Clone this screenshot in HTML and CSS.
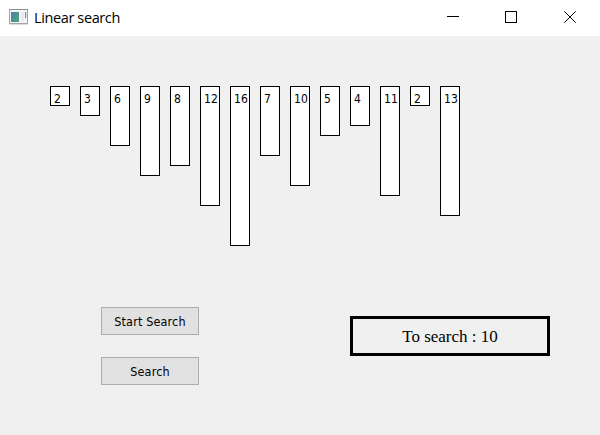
FILE: index.html
```html
<!DOCTYPE html>
<html lang="en">
<head>
<meta charset="utf-8">
<title>Linear search</title>
<link rel="stylesheet" href="styles.css">
</head>
<body>
<header class="titlebar">
  <svg class="app-icon" width="19" height="16" viewBox="0 0 19 16">
    <defs>
      <linearGradient id="pane" x1="0" y1="0" x2="1" y2="1">
        <stop offset="0" stop-color="#4a7fa8"/>
        <stop offset="1" stop-color="#4fa67c"/>
      </linearGradient>
    </defs>
    <rect x=".5" y=".5" width="18" height="14" fill="#f4f4f6" stroke="#a2a6ac"/>
    <path d="M0 .5h19" stroke="#8b9097"/>
    <path d="M0 15.5h19" stroke="#dcdcdc"/>
    <rect x="2" y="3" width="8" height="10" fill="url(#pane)"/>
    <rect x="12" y="3" width="3" height="10" fill="#e8eaee"/>
    <rect x="16" y="3" width="1.2" height="6" fill="#5b9d9c"/>
  </svg>
  <span class="title">Linear search</span>
  <div class="controls">
    <svg width="12" height="12" viewBox="0 0 12 12"><path d="M0 5.5h12"/></svg>
    <svg width="12" height="12" viewBox="0 0 12 12"><rect x=".5" y=".5" width="11" height="11"/></svg>
    <svg class="close" width="12" height="12" viewBox="0 0 12 12"><path d="M.3 .3l11.4 11.4M11.7 .3L.3 11.7"/></svg>
  </div>
</header>
<main>
  <div class="bars">
    <div class="bar" style="height:20px">2</div>
    <div class="bar" style="height:30px">3</div>
    <div class="bar" style="height:60px">6</div>
    <div class="bar" style="height:90px">9</div>
    <div class="bar" style="height:80px">8</div>
    <div class="bar" style="height:120px">12</div>
    <div class="bar" style="height:160px">16</div>
    <div class="bar" style="height:70px">7</div>
    <div class="bar" style="height:100px">10</div>
    <div class="bar" style="height:50px">5</div>
    <div class="bar" style="height:40px">4</div>
    <div class="bar" style="height:110px">11</div>
    <div class="bar" style="height:20px">2</div>
    <div class="bar" style="height:130px">13</div>
  </div>
  <div class="panel">
    <div class="buttons">
      <button>Start Search</button>
      <button>Search</button>
    </div>
    <div class="target">To search : 10</div>
  </div>
</main>
</body>
</html>
```
FILE: styles.css
```css
* { box-sizing: border-box; }

body {
  margin: 0;
  height: 435px;
  overflow: hidden;
  background: #f0f0f0;
  color: #000;
  font-family: "DejaVu Sans Condensed", "DejaVu Sans", sans-serif;
  font-stretch: condensed;
  font-size: 12px;
}

.titlebar {
  display: flex;
  align-items: center;
  height: 36px;
  padding: 0 24px 2px 9px;
  background: #fff;
}

.app-icon { margin-right: 6px; }

.title {
  padding-top: 2px;
  font: 14.5px/20px "Open Sans", sans-serif;
  letter-spacing: -0.38px;
}

.controls {
  display: flex;
  gap: 46px;
  margin-left: auto;
}

.controls svg {
  fill: none;
  stroke: #000;
}

.controls .close { margin-left: 1px; }

main { padding: 50px 50px 0; }

.bars {
  display: flex;
  align-items: flex-start;
  gap: 10px;
  height: 221px;
}

.bar {
  width: 20px;
  padding: 5px 0 0 3px;
  border: 1px solid #000;
  background: #fff;
  letter-spacing: 0.1px;
  line-height: 15px;
}

.panel {
  display: flex;
  justify-content: space-between;
  padding-left: 51px;
}

.buttons {
  display: flex;
  flex-direction: column;
  gap: 22px;
}

button {
  width: 98px;
  height: 28px;
  padding: 1px 0 0;
  border: 1px solid #adadad;
  background: #e1e1e1;
  color: #000;
  font: inherit;
  font-size: 12.5px;
  letter-spacing: 0.15px;
}

.target {
  width: 200px;
  height: 40px;
  margin-top: 9px;
  border: 3px solid #000;
  font: 17px/35px "Liberation Serif", serif;
  text-align: center;
}
```
